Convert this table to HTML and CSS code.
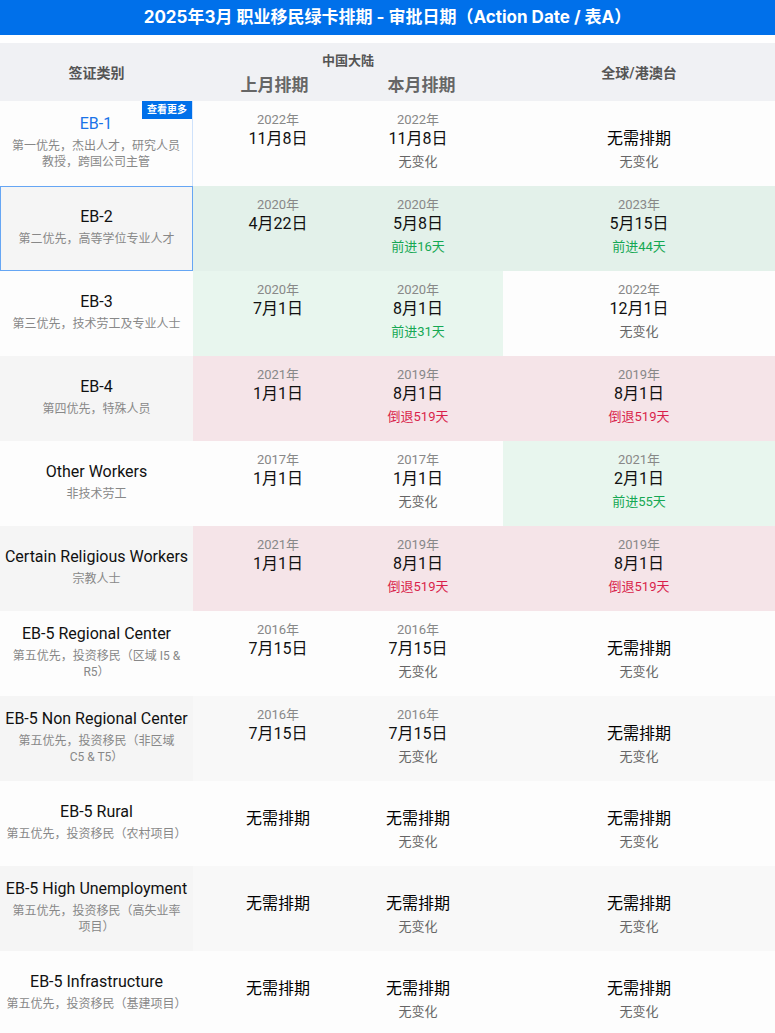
FILE: index.html
```html
<!DOCTYPE html>
<html lang="zh-CN">
<head>
<meta charset="utf-8">
<title>2025年3月 职业移民绿卡排期</title>
<link rel="stylesheet" href="styles.css">
</head>
<body>
<div class="title">2025年3月 职业移民绿卡排期 - 审批日期（Action Date / 表A）</div>
<div class="table">
  <div class="row head">
    <div class="c-cat">签证类别</div>
    <div class="c-cn">
      <div class="cn-label">中国大陆</div>
      <div class="cn-sub"><span>上月排期</span><span>本月排期</span></div>
    </div>
    <div class="c-gl">全球/港澳台</div>
  </div>

  <div class="row odd">
    <div class="c-cat hint">
      <span class="more">查看更多</span>
      <div class="cat-name link">EB-1</div>
      <div class="cat-desc">第一优先，杰出人才，研究人员<br>教授，跨国公司主管</div>
    </div>
    <div class="c-cn">
      <div class="dc"><div class="y">2022年</div><div class="m">11月8日</div></div>
      <div class="dc"><div class="y">2022年</div><div class="m">11月8日</div><div class="ch">无变化</div></div>
    </div>
    <div class="c-gl dc"><div class="y"></div><div class="m strong">无需排期</div><div class="ch">无变化</div></div>
  </div>

  <div class="row even">
    <div class="c-cat selected">
      <div class="cat-name">EB-2</div>
      <div class="cat-desc">第二优先，高等学位专业人才</div>
    </div>
    <div class="c-cn green">
      <div class="dc"><div class="y">2020年</div><div class="m">4月22日</div></div>
      <div class="dc"><div class="y">2020年</div><div class="m">5月8日</div><div class="ch up">前进16天</div></div>
    </div>
    <div class="c-gl dc green"><div class="y">2023年</div><div class="m">5月15日</div><div class="ch up">前进44天</div></div>
  </div>

  <div class="row odd">
    <div class="c-cat">
      <div class="cat-name">EB-3</div>
      <div class="cat-desc">第三优先，技术劳工及专业人士</div>
    </div>
    <div class="c-cn green">
      <div class="dc"><div class="y">2020年</div><div class="m">7月1日</div></div>
      <div class="dc"><div class="y">2020年</div><div class="m">8月1日</div><div class="ch up">前进31天</div></div>
    </div>
    <div class="c-gl dc"><div class="y">2022年</div><div class="m">12月1日</div><div class="ch">无变化</div></div>
  </div>

  <div class="row even">
    <div class="c-cat">
      <div class="cat-name">EB-4</div>
      <div class="cat-desc">第四优先，特殊人员</div>
    </div>
    <div class="c-cn pink">
      <div class="dc"><div class="y">2021年</div><div class="m">1月1日</div></div>
      <div class="dc"><div class="y">2019年</div><div class="m">8月1日</div><div class="ch down">倒退519天</div></div>
    </div>
    <div class="c-gl dc pink"><div class="y">2019年</div><div class="m">8月1日</div><div class="ch down">倒退519天</div></div>
  </div>

  <div class="row odd">
    <div class="c-cat">
      <div class="cat-name">Other Workers</div>
      <div class="cat-desc">非技术劳工</div>
    </div>
    <div class="c-cn">
      <div class="dc"><div class="y">2017年</div><div class="m">1月1日</div></div>
      <div class="dc"><div class="y">2017年</div><div class="m">1月1日</div><div class="ch">无变化</div></div>
    </div>
    <div class="c-gl dc green"><div class="y">2021年</div><div class="m">2月1日</div><div class="ch up">前进55天</div></div>
  </div>

  <div class="row even">
    <div class="c-cat">
      <div class="cat-name">Certain Religious Workers</div>
      <div class="cat-desc">宗教人士</div>
    </div>
    <div class="c-cn pink">
      <div class="dc"><div class="y">2021年</div><div class="m">1月1日</div></div>
      <div class="dc"><div class="y">2019年</div><div class="m">8月1日</div><div class="ch down">倒退519天</div></div>
    </div>
    <div class="c-gl dc pink"><div class="y">2019年</div><div class="m">8月1日</div><div class="ch down">倒退519天</div></div>
  </div>

  <div class="row odd">
    <div class="c-cat">
      <div class="cat-name">EB-5 Regional Center</div>
      <div class="cat-desc">第五优先，投资移民（区域 I5 &amp;<br>R5）</div>
    </div>
    <div class="c-cn">
      <div class="dc"><div class="y">2016年</div><div class="m">7月15日</div></div>
      <div class="dc"><div class="y">2016年</div><div class="m">7月15日</div><div class="ch">无变化</div></div>
    </div>
    <div class="c-gl dc"><div class="y"></div><div class="m strong">无需排期</div><div class="ch">无变化</div></div>
  </div>

  <div class="row even">
    <div class="c-cat">
      <div class="cat-name">EB-5 Non Regional Center</div>
      <div class="cat-desc">第五优先，投资移民（非区域<br>C5 &amp; T5）</div>
    </div>
    <div class="c-cn">
      <div class="dc"><div class="y">2016年</div><div class="m">7月15日</div></div>
      <div class="dc"><div class="y">2016年</div><div class="m">7月15日</div><div class="ch">无变化</div></div>
    </div>
    <div class="c-gl dc"><div class="y"></div><div class="m strong">无需排期</div><div class="ch">无变化</div></div>
  </div>

  <div class="row odd">
    <div class="c-cat">
      <div class="cat-name">EB-5 Rural</div>
      <div class="cat-desc">第五优先，投资移民（农村项目）</div>
    </div>
    <div class="c-cn">
      <div class="dc"><div class="y"></div><div class="m strong">无需排期</div></div>
      <div class="dc"><div class="y"></div><div class="m strong">无需排期</div><div class="ch">无变化</div></div>
    </div>
    <div class="c-gl dc"><div class="y"></div><div class="m strong">无需排期</div><div class="ch">无变化</div></div>
  </div>

  <div class="row even">
    <div class="c-cat">
      <div class="cat-name">EB-5 High Unemployment</div>
      <div class="cat-desc">第五优先，投资移民（高失业率<br>项目）</div>
    </div>
    <div class="c-cn">
      <div class="dc"><div class="y"></div><div class="m strong">无需排期</div></div>
      <div class="dc"><div class="y"></div><div class="m strong">无需排期</div><div class="ch">无变化</div></div>
    </div>
    <div class="c-gl dc"><div class="y"></div><div class="m strong">无需排期</div><div class="ch">无变化</div></div>
  </div>

  <div class="row odd">
    <div class="c-cat">
      <div class="cat-name">EB-5 Infrastructure</div>
      <div class="cat-desc">第五优先，投资移民（基建项目）</div>
    </div>
    <div class="c-cn">
      <div class="dc"><div class="y"></div><div class="m strong">无需排期</div></div>
      <div class="dc"><div class="y"></div><div class="m strong">无需排期</div><div class="ch">无变化</div></div>
    </div>
    <div class="c-gl dc"><div class="y"></div><div class="m strong">无需排期</div><div class="ch">无变化</div></div>
  </div>
</div>
</body>
</html>
```
FILE: styles.css
```css
html, body {
  margin: 0;
  padding: 0;
  background: #ffffff;
}
body {
  font-family: Roboto, "Noto Sans CJK SC", sans-serif;
  color: #111;
  width: 775px;
}
.title {
  background: #0070ea;
  color: #ffffff;
  height: 35px;
  line-height: 35px;
  font-family: Inter, "Noto Sans CJK SC", sans-serif;
  font-size: 17px;
  font-weight: 700;
  text-align: center;
}
.table {
  margin-top: 8px;
}
.row {
  display: grid;
  grid-template-columns: 193px 310px 272px;
  height: 85px;
}
.row.head {
  height: 58px;
  background: #f0f1f4;
}
.head .c-cat,
.head .c-gl {
  display: flex;
  align-items: center;
  justify-content: center;
  font-size: 14px;
  font-weight: 600;
  color: #555;
  padding: 0;
}
.head .c-cn {
  display: block;
  padding: 9px 8px 0;
  text-align: center;
}
.cn-label {
  font-size: 13px;
  line-height: 18px;
  font-weight: 600;
  color: #555;
}
.cn-sub {
  display: grid;
  grid-template-columns: 1fr 1fr;
  margin-top: 3px;
  font-size: 17px;
  line-height: 24px;
  font-weight: 600;
  color: #666;
}
.row.odd {
  background: #fdfdfd;
}
.row.even {
  background: #f8f8f8;
}
.row.even .c-cat {
  background: #f5f5f5;
}
.c-cat {
  position: relative;
  box-sizing: border-box;
  display: flex;
  flex-direction: column;
  justify-content: center;
  align-items: center;
  text-align: center;
  padding: 1px 2px 6px;
}
.c-cat.hint {
  border-right: 1px solid #cfe2fb;
}
.c-cat.selected {
  border: 1px solid #66a6f4;
}
.more {
  position: absolute;
  top: 0;
  right: 0;
  background: #0070ea;
  color: #ffffff;
  font-size: 10px;
  font-weight: 700;
  line-height: 18px;
  padding: 0 5px;
}
.cat-name {
  font-size: 16px;
  line-height: 24px;
  color: #111;
  white-space: nowrap;
}
.cat-name.link {
  color: #1a73e8;
}
.cat-desc {
  margin-top: 2px;
  font-size: 12px;
  line-height: 16px;
  color: #888;
}
.c-cn {
  display: grid;
  grid-template-columns: 140px 140px;
  padding: 0 15px;
}
.dc {
  text-align: center;
  padding-top: 10px;
}
.y {
  height: 18px;
  font-size: 13px;
  line-height: 18px;
  color: #888;
}
.m {
  font-size: 16px;
  line-height: 20px;
  color: #111;
}
.m.strong {
  font-weight: 400;
  color: #000;
}
.ch {
  margin-top: 3px;
  font-size: 13px;
  line-height: 20px;
  color: #666;
}
.ch.up {
  color: #15a853;
}
.ch.down {
  color: #d91f4b;
}
.odd .green {
  background: #e8f6ee;
}
.even .green {
  background: #e3f1ea;
}
.pink {
  background: #f5e4e8;
}
```
